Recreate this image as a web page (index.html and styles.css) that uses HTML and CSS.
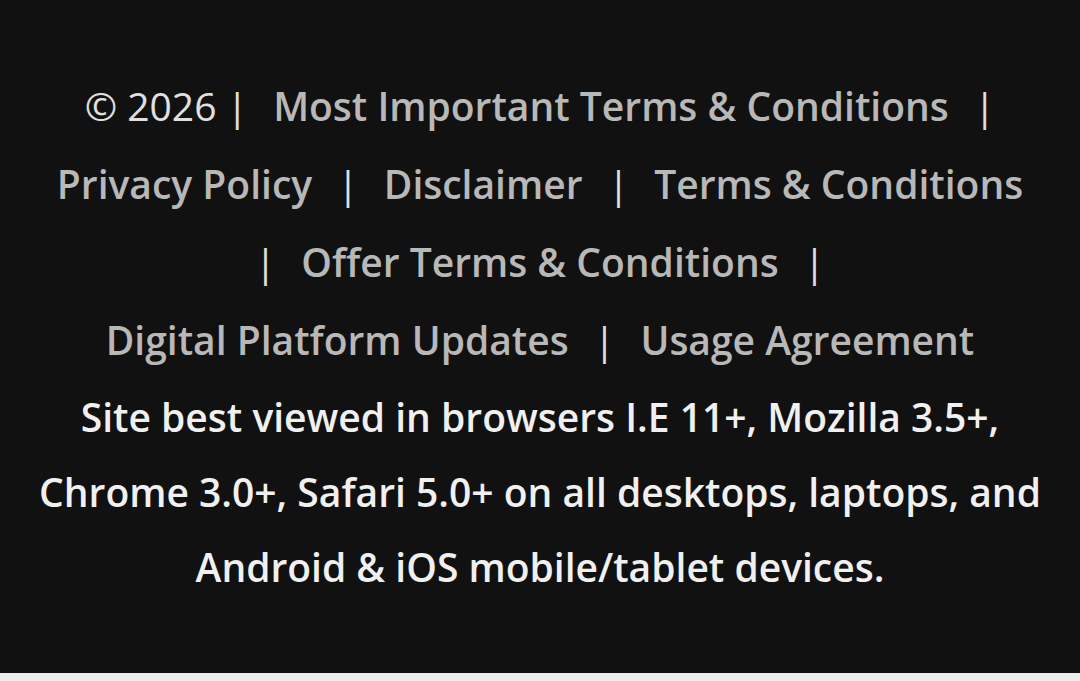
FILE: index.html
```html
<!DOCTYPE html>
<html lang="en">
<head>
<meta charset="utf-8">
<title>Footer</title>
<link rel="stylesheet" href="styles.css">
</head>
<body>
<footer class="footer">
  <p class="links">© 2026 | <a class="link" href="#">Most Important Terms &amp; Conditions</a> | <a class="link" href="#">Privacy Policy</a> | <a class="link" href="#">Disclaimer</a> | <a class="link" href="#">Terms &amp; Conditions</a> | <a class="link" href="#">Offer Terms &amp; Conditions</a> | <a class="link" href="#">Digital Platform Updates</a> | <a class="link" href="#">Usage Agreement</a></p>
  <p class="note">Site best viewed in browsers I.E 11+, Mozilla 3.5+, Chrome 3.0+, Safari 5.0+ on all desktops, laptops, and Android &amp; iOS mobile/tablet devices.</p>
</footer>
</body>
</html>
```
FILE: styles.css
```css
html, body {
  margin: 0;
  padding: 0;
  background: #ededed;
}
.footer {
  background: #111111;
  height: 673px;
  box-sizing: border-box;
  padding: 67px 36px 0;
  font-family: "Open Sans", "Liberation Sans", sans-serif;
  font-size: 39px;
  text-align: center;
}
.links {
  margin: 0;
  line-height: 78px;
  color: #e0e0e0;
  font-weight: 400;
}
.link {
  color: #b8b8b8;
  font-weight: 600;
  text-decoration: none;
  white-space: nowrap;
  margin: 0 15px;
}
.note {
  margin: 0;
  line-height: 75px;
  color: #f0f0f0;
  font-weight: 600;
}
```
